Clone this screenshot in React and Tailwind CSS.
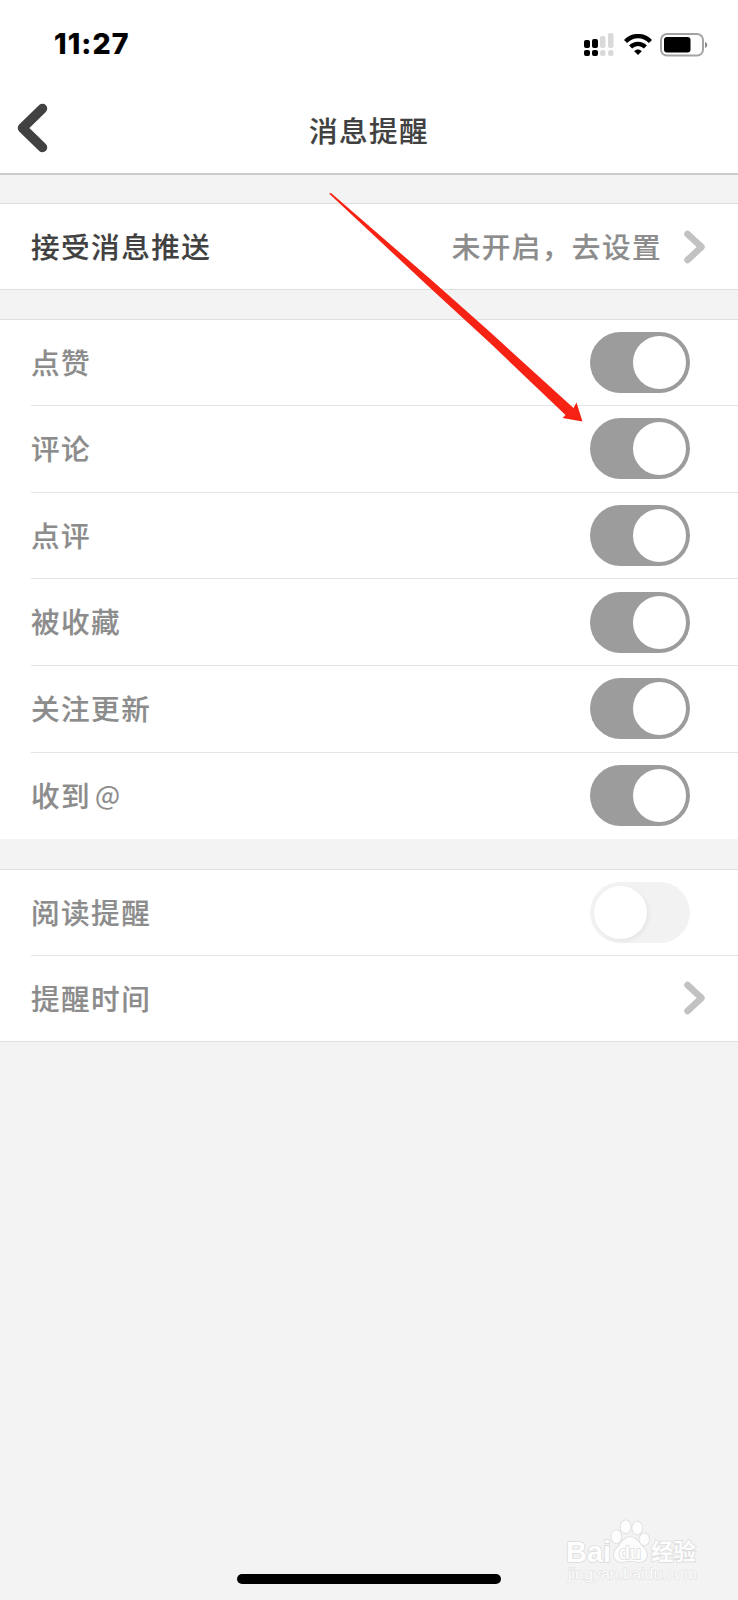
import React from 'react';

// --- Data ---

const notifyRows = [
    { label: "点赞", height: "h-[86px]" },
    { label: "评论", height: "h-[86.7px]" },
    { label: "点评", height: "h-[86.7px]" },
    { label: "被收藏", height: "h-[86.7px]" },
    { label: "关注更新", height: "h-[86.7px]" },
    { label: "收到", suffix: "@", height: "h-[86.2px]" },
];

// --- Small pieces ---

const Toggle = ({ on }) => (
    <div className={`flex h-[61px] w-[100px] items-center rounded-full px-1 ${on ? "justify-end bg-[#9c9c9c]" : "justify-start bg-[#f2f2f2]"}`}>
        <div className={`h-[53px] w-[53px] rounded-full bg-white ${on ? "" : "shadow-[2px_2px_4px_rgba(0,0,0,0.05)]"}`} />
    </div>
);

const Chevron = () => (
    <svg className="h-[34px] w-[22px]" viewBox="0 0 22 34" fill="none" stroke="#c2c2c2" strokeWidth="6.5" strokeLinecap="round" strokeLinejoin="round">
        <path d="M3.5 4L17.5 17L3.5 30" />
    </svg>
);

const StatusBar = () => (
    <div className="flex h-[87px] items-center justify-between pl-[54px] pr-[29px]">
        <span className="pt-[2px] font-[Inter] text-[28.5px] font-extrabold leading-none tracking-[1.1px] text-black">11:27</span>
        <div className="flex items-center pt-[2px]">
            {/* Dual SIM signal */}
            <svg width="30" height="24" viewBox="0 0 30 24">
                <g fill="#000">
                    <rect x="0" y="7" width="6" height="8" rx="2" />
                    <rect x="8" y="6" width="6" height="9" rx="2" />
                    <rect x="0" y="17" width="6" height="6" rx="2" />
                    <rect x="8" y="17" width="6" height="6" rx="2" />
                </g>
                <g fill="#d9d9d9">
                    <rect x="16" y="3" width="5.5" height="12" rx="2" />
                    <rect x="24" y="0" width="5.5" height="15" rx="2" />
                    <rect x="16" y="17" width="5.5" height="6" rx="2.5" />
                    <rect x="24" y="17" width="5.5" height="6" rx="2.5" />
                </g>
            </svg>
            <svg className="ml-[10px]" width="28" height="22" viewBox="0 0 28 22" fill="none" stroke="#000">
                <path d="M1.5 7.5C8.6 .3 19.4 .3 26.5 7.5" strokeWidth="4.4" />
                <path d="M6.6 13C10.8 8.8 17.2 8.8 21.4 13" strokeWidth="4.2" />
                <path d="M10.2 17.2C12.5 15 15.5 15 17.8 17.2L14 21Z" fill="#000" stroke="none" />
            </svg>
            <svg className="ml-[8px] mr-px" width="48" height="24" viewBox="0 0 48 24">
                <rect x="1" y="1" width="42" height="21.6" rx="6" fill="none" stroke="#a3a3a3" strokeWidth="2" />
                <rect x="4" y="4" width="26.5" height="15.6" rx="3" fill="#000" />
                <path d="M45 9C48 10 48 14 45 15Z" fill="#8c8c8c" />
            </svg>
        </div>
    </div>
);

const Watermark = () => (
    <svg className="h-[70px] w-[140px] tracking-normal" viewBox="0 0 140 70">
        <g fill="#fdfdfd" stroke="#dcdcdc" strokeWidth="1.6" paintOrder="stroke">
            <text x="0" y="46.5" fontFamily="Liberation Sans, sans-serif" fontWeight="700" fontSize="29" textLength="45" lengthAdjust="spacingAndGlyphs">Bai</text>
            <ellipse cx="50.3" cy="21.7" rx="5" ry="6.5" />
            <ellipse cx="59.7" cy="11.7" rx="5" ry="6.5" />
            <ellipse cx="71.3" cy="13" rx="5" ry="6.5" />
            <ellipse cx="78.3" cy="24.3" rx="4.8" ry="6" />
            <path d="M64 22C70 22 73 28 78 33C83 38 82 47 73 47C69 47 68 46 64.5 46C61 46 59 47 56 47C47 47 46 38 51 33C56 28 58 22 64 22Z" />
            <text x="53" y="44" fontFamily="Liberation Sans, sans-serif" fontWeight="700" fontSize="19" textLength="22" lengthAdjust="spacingAndGlyphs">du</text>
            <text x="85" y="44.5" fontFamily="Noto Sans CJK SC, sans-serif" fontWeight="700" fontSize="23" textLength="45" lengthAdjust="spacingAndGlyphs">经验</text>
        </g>
        <text x="2" y="63.5" fill="#fcfcfc" stroke="#e0e0e0" strokeWidth="1" paintOrder="stroke" fontFamily="Liberation Sans, sans-serif" fontSize="15" textLength="129" lengthAdjust="spacingAndGlyphs">jingyan.baidu.com</text>
    </svg>
);

// --- The settings screen ---

const App = () => {
    return (
        <div className="relative flex h-[1600px] w-[738px] flex-col overflow-hidden bg-[#f3f3f3] font-['Noto_Sans_CJK_SC',sans-serif] text-[28.6px] font-medium leading-none tracking-[1.45px] text-[#8c8c8c] [-webkit-text-stroke:0.15px]">
            <header className="h-[175px] shrink-0 border-b-2 border-[#cacaca] bg-white">
                <StatusBar />
                <div className="grid h-[86px] grid-cols-[1fr_auto_1fr] items-center pl-[17px] pr-[17px]">
                    <svg className="mb-[5px] h-[50px] w-[31px]" viewBox="0 0 31 50" fill="none" stroke="#414141" strokeWidth="9.5" strokeLinecap="round" strokeLinejoin="round">
                        <path d="M25.5 5.5L5.5 25L25.5 44.5" />
                    </svg>
                    <h1 className="text-[#414141]">消息提醒</h1>
                </div>
            </header>

            <section className="mt-7 flex h-[87px] shrink-0 items-center border-y border-[#dfdfdf] bg-white pl-[31px] pr-[32px]">
                <span className="-mt-px text-[#414141]">接受消息推送</span>
                <span className="-mt-px ml-auto mr-[22px]">未开启，去设置</span>
                <Chevron />
            </section>

            <section className="mt-[29px] shrink-0 border-t border-[#dfdfdf] bg-white pl-[31px]">
                {notifyRows.map((row, index) => (
                    <div key={row.label} className={`flex items-center justify-between pr-[48px] ${row.height} ${index < notifyRows.length - 1 ? "border-b border-[#e4e4e4]" : ""}`}>
                        <span className="-mt-px flex items-center">
                            {row.label}
                            {row.suffix && <span className="-mt-[2px] ml-[4px] text-[26.5px] font-normal">{row.suffix}</span>}
                        </span>
                        <Toggle on />
                    </div>
                ))}
            </section>

            <section className="mt-[30px] shrink-0 border-y border-[#dfdfdf] bg-white pl-[31px]">
                <div className="flex h-[86px] items-center justify-between border-b border-[#e4e4e4] pr-[48px]">
                    <span className="-mt-px">阅读提醒</span>
                    <Toggle />
                </div>
                <div className="flex h-[85px] items-center justify-between pr-[32px]">
                    <span>提醒时间</span>
                    <Chevron />
                </div>
            </section>

            <footer className="mb-[15px] mt-auto flex items-end justify-between pl-[237px] pr-[32px]">
                <div className="mb-px h-[10px] w-[264px] rounded-full bg-black" />
                <Watermark />
            </footer>

            {/* Arrow pointing at the comment switch */}
            <svg className="pointer-events-none absolute left-0 top-0" width="738" height="500" viewBox="0 0 738 500">
                <path d="M329 193.5L331 193L432 280.5L490 332L573.5 408L576.5 402.5L582.5 421.5L562.5 418L565.5 415L490 343L428 286Z" fill="#f62314" />
            </svg>
        </div>
    );
};

export default App;
